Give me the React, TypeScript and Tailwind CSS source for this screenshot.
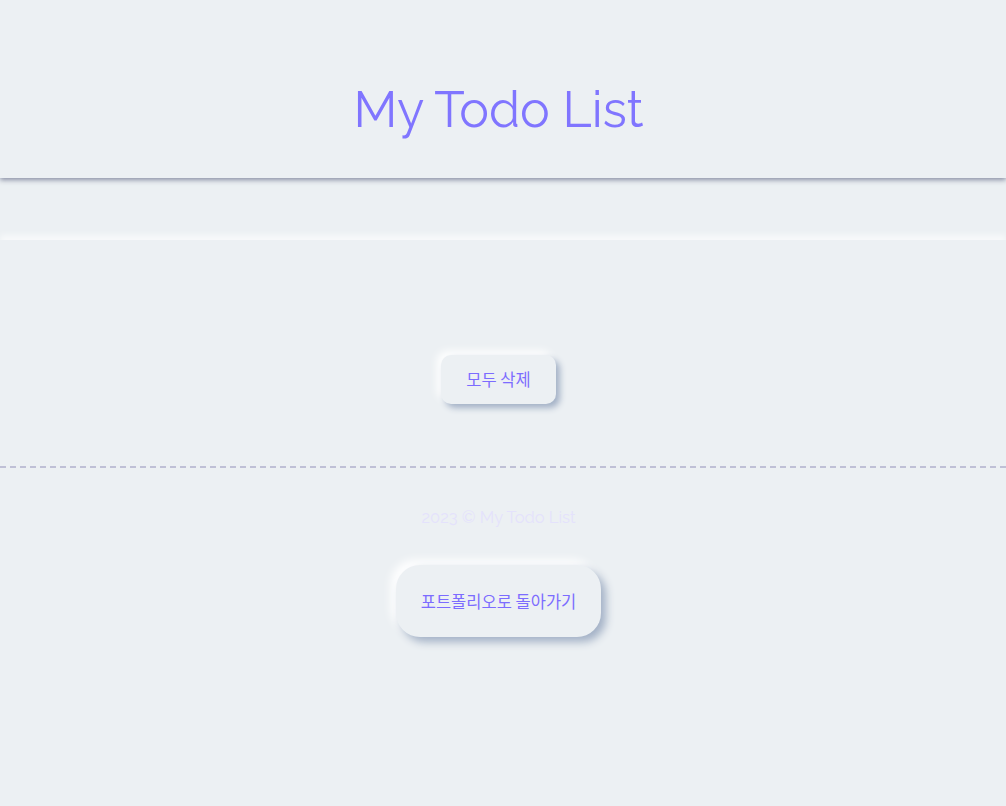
import React from "react";

export default function App() {
  return (
    <div
      className="min-h-[806px] bg-[#ecf0f3] flex flex-col"
      style={{ fontFamily: "Raleway, 'Lato', 'Noto Sans CJK KR', sans-serif" }}
    >
      <header className="h-[178px] flex items-center justify-center pr-[9px] shadow-[0_2px_5px_rgba(130,136,158,0.95)] relative z-10 bg-[#ecf0f3]">
        <h1 className="text-[50px] font-normal text-[#8075ff] mt-[42px] leading-none">
          My Todo List
        </h1>
      </header>
      <div className="h-[62px]" />
      <main className="shadow-[0_-5px_6px_rgba(255,255,255,0.6)] border-b-2 border-dashed border-[#bfc0d6] pt-[115px] pb-[62px] pr-[9px] flex justify-center">
        <button className="w-[115px] h-[49px] rounded-[10px] bg-[#ecf0f3] text-[#7c6cff] text-[16.5px] shadow-[4px_4px_6px_#a3b1c6,-4px_-4px_8px_#ffffff]" style={{ fontFamily: "'Noto Sans CJK KR', sans-serif" }}>
          모두 삭제
        </button>
      </main>
      <footer className="flex flex-col items-center pt-[39px] pr-[9px]">
        <p className="text-[16.5px] text-[#e4e2fc] leading-[20px]">2023 © My Todo List</p>
        <button className="mt-[38px] w-[205px] h-[72px] rounded-[24px] bg-[#ecf0f3] text-[#7c6cff] text-[16.5px] shadow-[5px_5px_8px_#a3b1c6,-5px_-5px_10px_#ffffff]" style={{ fontFamily: "'Noto Sans CJK KR', sans-serif" }}>
          포트폴리오로 돌아가기
        </button>
      </footer>
    </div>
  );
}
